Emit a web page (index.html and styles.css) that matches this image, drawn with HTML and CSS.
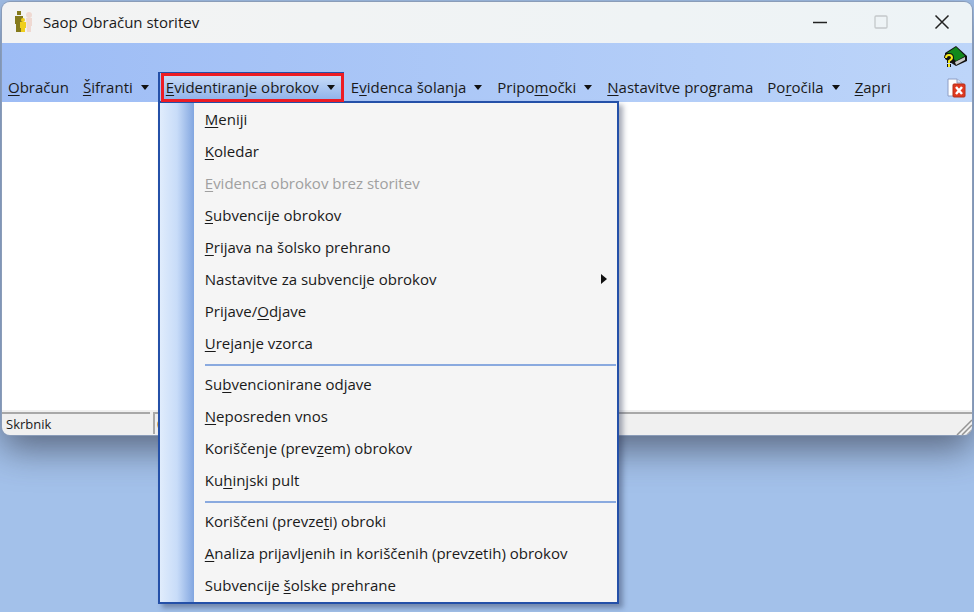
FILE: index.html
```
<!DOCTYPE html>
<html lang="sl">
<head>
    <meta charset="UTF-8">
    <meta name="viewport" content="width=device-width, initial-scale=1.0">
    <title>Saop Obračun storitev</title>
    <link rel="stylesheet" href="styles.css">
</head>
<body>
    <div class="window">
        <header class="titlebar">
            <svg class="app-icon" width="20" height="24" viewBox="0 0 20 24">
                <path d="M3 1h4v4H3z" fill="#857a1c"/>
                <path d="M1 6h8v8H8v8H2v-8H1z" fill="#857a1c"/>
                <circle cx="15" cy="5" r="3" fill="#efd9d2"/>
                <path d="M12 8h6v8h-1v6h-4z" fill="#efd9d2"/>
                <circle cx="9" cy="10" r="2" fill="#f0cf1c"/>
                <path d="M6 12h6v6h-1v4H7v-4H6z" fill="#f0cf1c"/>
            </svg>
            <h1 class="title">Saop Obračun storitev</h1>
            <div class="window-buttons">
                <button class="window-button" aria-label="Minimiraj">
                    <svg width="16" height="16" viewBox="0 0 16 16"><path d="M1 8.500h14" stroke="#222" stroke-width="1.500"/></svg>
                </button>
                <button class="window-button" aria-label="Maksimiraj" disabled>
                    <svg width="16" height="16" viewBox="0 0 16 16"><rect x="2" y="2" width="12" height="12" rx="1" fill="none" stroke="#c4c8ca" stroke-width="1.300"/></svg>
                </button>
                <button class="window-button" aria-label="Zapri okno">
                    <svg width="16" height="16" viewBox="0 0 16 16"><path d="M1.500 1.500l13 13M14.500 1.500l-13 13" stroke="#222" stroke-width="1.500"/></svg>
                </button>
            </div>
        </header>

        <div class="toolbar">
            <nav class="menubar">
                <button class="menu-button"><u>O</u>bračun</button>
                <button class="menu-button drop"><u>Š</u>ifranti</button>
                <div class="menu-open">
                    <button class="menu-button drop active"><u>E</u>videntiranje obrokov</button>
                    <div class="menu">
                        <button class="menu-item"><u>M</u>eniji</button>
                        <button class="menu-item"><u>K</u>oledar</button>
                        <button class="menu-item" disabled><u>E</u>videnca obrokov brez storitev</button>
                        <button class="menu-item"><u>S</u>ubvencije obrokov</button>
                        <button class="menu-item"><u>P</u>rijava na šolsko prehrano</button>
                        <button class="menu-item submenu"><span>Nastavitve za subvenci<u>j</u>e obrokov</span></button>
                        <button class="menu-item">Prijave/<u>O</u>djave</button>
                        <button class="menu-item"><u>U</u>rejanje vzorca</button>
                        <hr class="separator">
                        <button class="menu-item">Su<u>b</u>vencionirane odjave</button>
                        <button class="menu-item"><u>N</u>eposreden vnos</button>
                        <button class="menu-item">Koriščenje (prev<u>z</u>em) obrokov</button>
                        <button class="menu-item">Ku<u>h</u>injski pult</button>
                        <hr class="separator">
                        <button class="menu-item">Koriščeni (prevze<u>t</u>i) obroki</button>
                        <button class="menu-item"><u>A</u>naliza prijavljenih in koriščenih (prevzetih) obrokov</button>
                        <button class="menu-item">Subvencije <u>š</u>olske prehrane</button>
                    </div>
                </div>
                <button class="menu-button drop">E<u>v</u>idenca šolanja</button>
                <button class="menu-button drop">Pripo<u>m</u>očki</button>
                <button class="menu-button"><u>N</u>astavitve programa</button>
                <button class="menu-button drop">Po<u>r</u>očila</button>
                <button class="menu-button"><u>Z</u>apri</button>
            </nav>
            <div class="tools">
                <button class="tool" aria-label="Pomoč">
                    <svg width="24" height="22" viewBox="0 0 24 22">
                        <path d="M1 7L12 0l11 10v5l-11 5L1 13z" fill="#111"/>
                        <path d="M3 7l9-6 9 9-9 5z" fill="#12891c"/>
                        <path d="M11 16l10-5v3l-9 5z" fill="#c9c9c9"/>
                        <path d="M2 12q0-3 3-3t3 3q0 1-3 3v2M5 18v3" fill="none" stroke="#111" stroke-width="4"/>
                        <path d="M2 12q0-3 3-3t3 3q0 1-3 3v2M5 18v3" fill="none" stroke="#f7ea1c" stroke-width="2"/>
                    </svg>
                </button>
                <button class="tool" aria-label="Zapri dokument">
                    <svg width="24" height="22" viewBox="0 0 24 22">
                        <path d="M4 2h9l5 4v13H4z" fill="#fff" stroke="#8e9ec4"/>
                        <path d="M13 2v4h5" fill="#d5e0f5" stroke="#8e9ec4"/>
                        <rect x="9" y="7" width="12" height="13" rx="1" fill="#e0391f" stroke="#b52f1a"/>
                        <path d="M12 10l6 7M18 10l-6 7" stroke="#fff" stroke-width="2.500"/>
                    </svg>
                </button>
            </div>
        </div>

        <main class="workspace"></main>

        <footer class="statusbar">
            <div class="status-user">Skrbnik</div>
            <div class="status-info">0</div>
            <svg class="grip" width="16" height="16" viewBox="0 0 16 16">
                <path d="M1 16L16 1M6 16L16 6M11 16l5-5" stroke="#949494" stroke-width="1.500"/>
            </svg>
        </footer>
    </div>
</body>
</html>
```
FILE: styles.css
```
* {
    box-sizing: border-box;
}

body {
    margin: 0;
    padding: 2px;
    min-height: 100vh;
    background-color: #a3c1ea;
    color: #1a1a1a;
    font-family: "Open Sans", "Noto Sans", sans-serif;
    font-size: 15px;
    overflow: hidden;
}

button {
    border: none;
    padding: 0;
    background: none;
    color: inherit;
    font: inherit;
}

u {
    text-underline-offset: 2px;
}

.window {
    position: relative;
    border-radius: 8px;
    box-shadow: 0 0 0 1px #8a9cb8, 0 14px 36px rgba(50, 55, 70, 0.65);
}

.titlebar {
    display: flex;
    align-items: center;
    height: 41px;
    padding: 0 0 2px 12px;
    border-radius: 8px 8px 0 0;
    background: linear-gradient(90deg, #f3f3f3, #edf3f6);
}

.title {
    flex: 1;
    margin: 0 0 0 9px;
    font-size: 15px;
    font-weight: normal;
}

.window-buttons {
    display: flex;
}

.window-button {
    display: flex;
    justify-content: center;
    align-items: center;
    width: 61px;
    height: 39px;
}

.toolbar {
    display: flex;
    justify-content: space-between;
    align-items: flex-end;
    height: 59px;
    background: linear-gradient(90deg, #9dbcf5, #bdd5f9);
}

.menubar {
    display: flex;
    align-items: flex-end;
    gap: 1px;
    height: 30px;
}

.menu-button {
    height: 29px;
    padding: 0 7px 1px 6px;
    white-space: nowrap;
}

.drop {
    padding-right: 8px;
}

.drop::after {
    content: "";
    display: inline-block;
    margin-left: 8px;
    border: 4px solid transparent;
    border-top: 5px solid #111;
    border-bottom: none;
    vertical-align: 3px;
}

.menu-open {
    position: relative;
    height: 30px;
    padding-left: 1px;
    border: solid #2450a8;
    border-width: 1px 0 0 2px;
}

.menu-button.active {
    border: 3px solid #ed1c24;
    padding: 0 6px 1px 2px;
    background: linear-gradient(#c6dbf8, #92b4ea);
}

.menu {
    position: absolute;
    top: 28px;
    left: -2px;
    z-index: -1;
    width: 461px;
    padding: 0 1px 1px 45px;
    border: 2px solid #2450a8;
    background: linear-gradient(90deg, #e0ecfc, #c8dcf8 17px, #82a6e0 34px, #f5f5f5 34px);
    box-shadow: 4px 4px 5px rgba(40, 50, 80, 0.4);
}

.menu-open {
    z-index: 1;
}

.menu-item {
    display: block;
    width: 100%;
    height: 32px;
    padding-right: 9px;
    text-align: left;
}

.menu-item:disabled {
    color: #a0a0a0;
}

.submenu {
    display: flex;
    justify-content: space-between;
    align-items: center;
}

.submenu::after {
    content: "";
    border: 5px solid transparent;
    border-left: 6px solid #111;
    border-right: none;
}

.separator {
    height: 2px;
    margin: 5px 0 2px;
    border: none;
    background-color: #8aaadf;
}

.tools {
    display: flex;
    flex-direction: column;
    gap: 9px;
    padding: 0 4px 3px 0;
}

.tool {
    display: flex;
}

.workspace {
    height: 308px;
    background-color: #fff;
}

.statusbar {
    position: relative;
    display: flex;
    height: 25px;
    padding: 2px 0 1px;
    border-radius: 0 0 8px 8px;
    background-color: #f0f0f0;
    font-size: 13px;
    line-height: 20px;
    overflow: hidden;
}

.status-user {
    width: 148px;
    margin-right: 3px;
    padding-left: 4px;
    border-top: 2px solid #a8a8a8;
}

.status-info {
    flex: 1;
    padding-left: 2px;
    border-top: 2px solid #a8a8a8;
    border-left: 2px solid #a8a8a8;
}

/* resize handle over the corner */
.grip {
    position: absolute;
    right: 0;
    bottom: 0;
}
```
